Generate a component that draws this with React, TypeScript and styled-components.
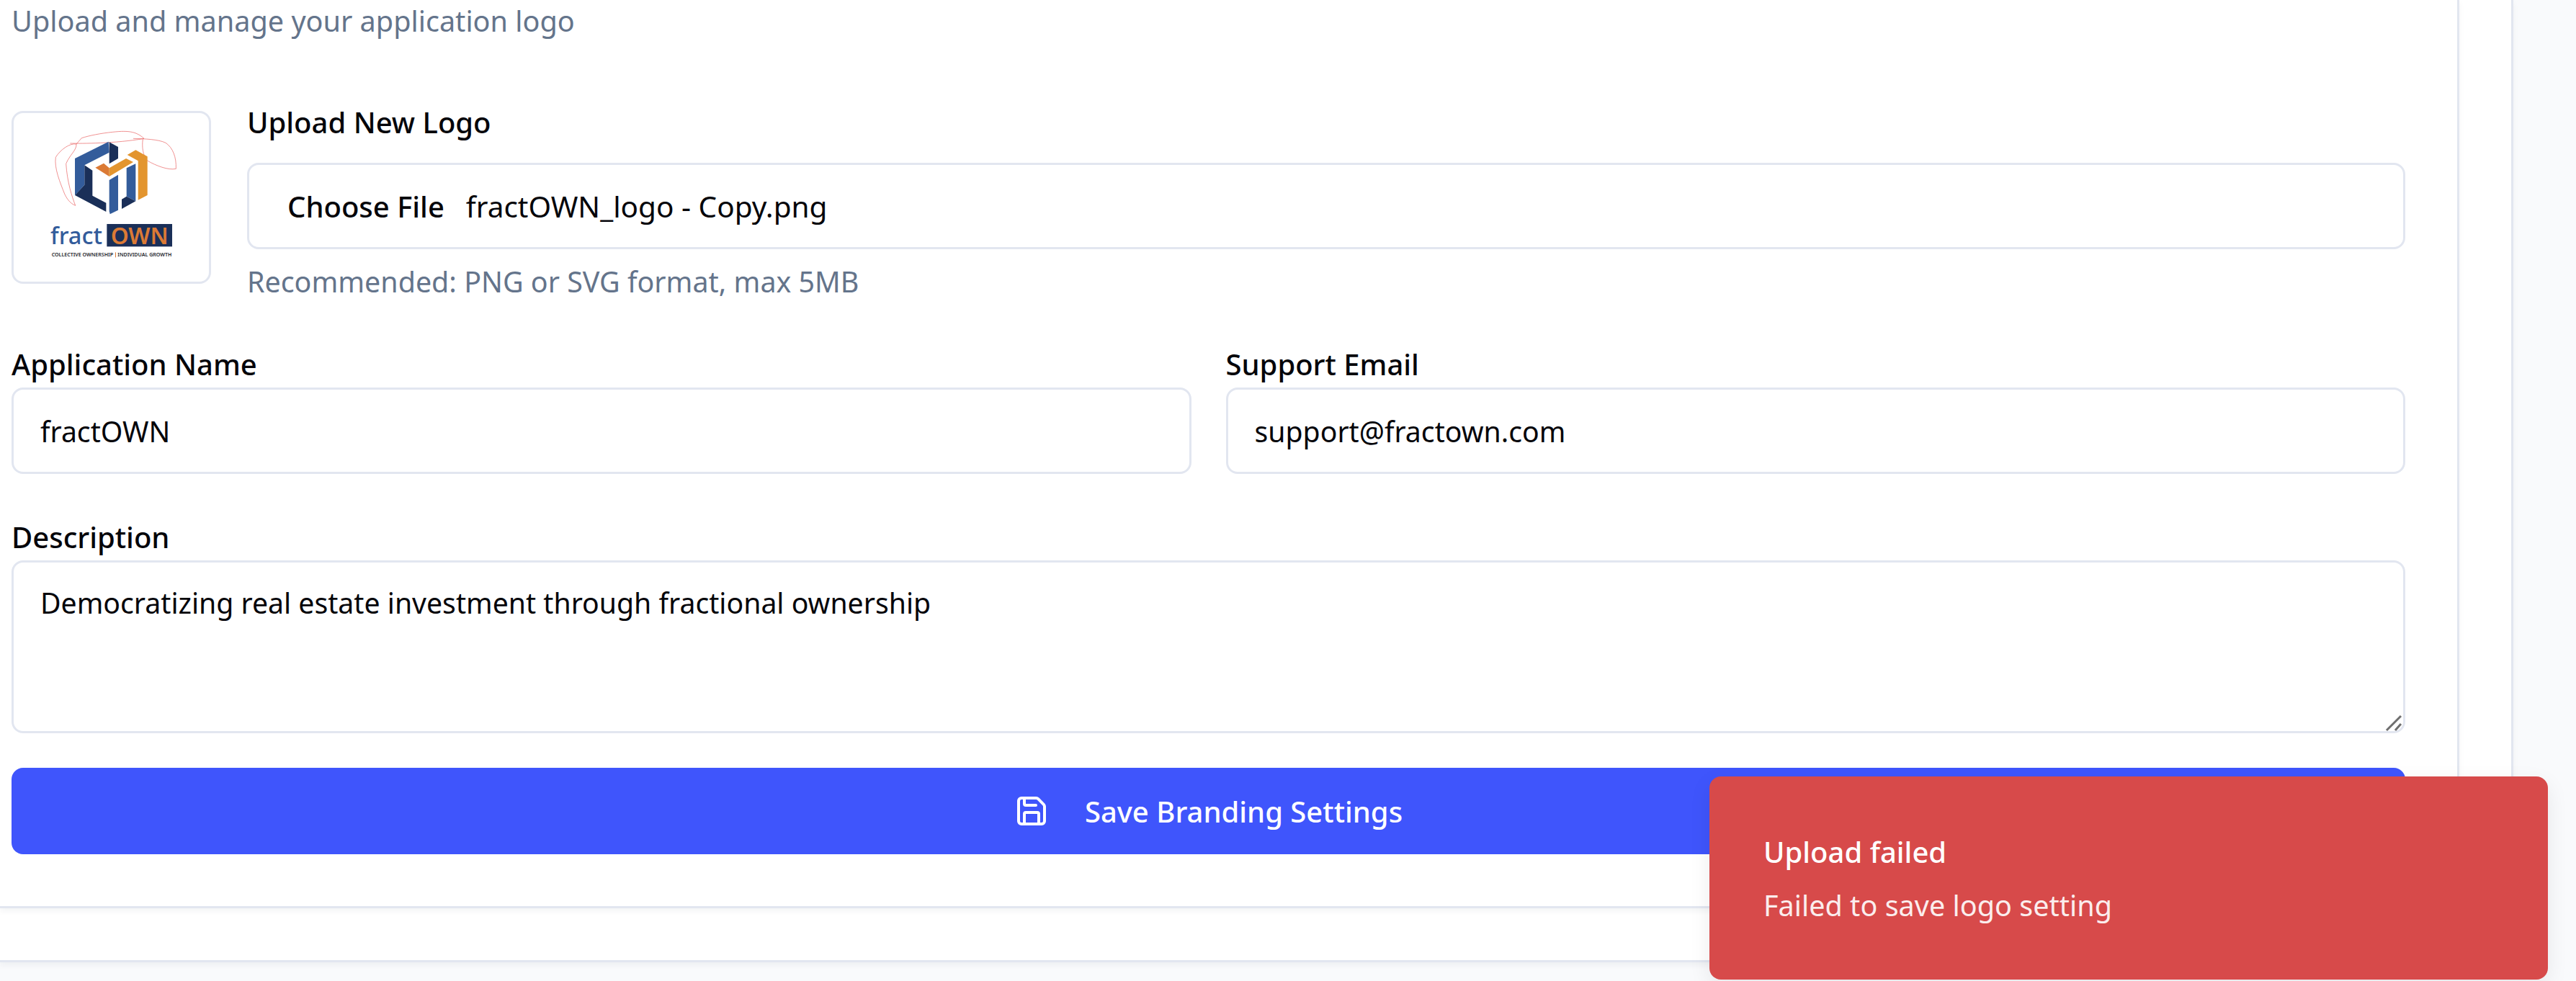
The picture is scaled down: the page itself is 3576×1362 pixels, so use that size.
import React from 'react';
import styled, { createGlobalStyle } from 'styled-components';
import { Save } from 'lucide-react';

const GlobalStyle = createGlobalStyle`
  html, body {
    margin: 0;
    padding: 0;
    background: #f9fafc;
    overflow: hidden;
  }
  * {
    box-sizing: border-box;
  }
`;

const Page = styled.div`
  position: relative;
  width: 3576px;
  height: 1362px;
  overflow: hidden;
  font-family: 'Noto Sans', 'Open Sans', sans-serif;
  font-size: 40px;
  color: #05050a;
  background: #f9fafc;
`;

const OuterCard = styled.div`
  width: 3489px;
  height: 1336px;
  background: #fff;
  border-right: 3px solid #e2e6f0;
  border-bottom: 3px solid #e2e6f0;
  box-shadow: 0 4px 8px rgba(20, 30, 60, 0.05);
`;

const InnerCard = styled.section`
  width: 3414px;
  height: 1261px;
  padding: 0 72px 0 16px;
  background: #fff;
  border-right: 3px solid #e2e6f0;
  border-bottom: 3px solid #e2e6f0;
  box-shadow: 0 4px 8px rgba(20, 30, 60, 0.05);
`;

const Subtitle = styled.p`
  margin: 0;
  height: 154px;
  padding-top: 4px;
  font-size: 39.6px;
  line-height: 50px;
  color: #64748b;
`;

const LogoRow = styled.div`
  display: flex;
  gap: 50px;
  height: 342px;
`;

const LogoBox = styled.div`
  flex: none;
  width: 277px;
  height: 240px;
  background: #fff;
  border: 3px solid #e2e6f0;
  border-radius: 16px;
  overflow: hidden;
`;

const LogoArt = styled.svg`
  display: block;
  width: 277px;
  height: 240px;
`;

const UploadColumn = styled.div`
  flex: 1;
  min-width: 0;
`;

const Label = styled.label`
  display: block;
  height: 72px;
  line-height: 32px;
  font-weight: 500;
`;

const FileField = styled.div`
  display: flex;
  align-items: center;
  height: 120px;
  padding-left: 53px;
  border: 3px solid #e2e6f0;
  border-radius: 16px;
  background: #fff;
`;

const FileButton = styled.span`
  margin-right: 30px;
  font-weight: 500;
`;

const FileName = styled.span`
  font-size: 40.5px;
`;

const Hint = styled.p`
  margin: 20px 0 0;
  font-size: 39.4px;
  line-height: 50px;
  color: #64748b;
`;

const FieldGrid = styled.div`
  display: grid;
  grid-template-columns: 1fr 1fr;
  column-gap: 48px;
`;

const FormLabel = styled(Label)`
  height: 50px;
  line-height: 36px;
  margin-top: -8px;
`;

const TextInput = styled.input`
  display: block;
  width: 100%;
  height: 120px;
  padding: 0 37px;
  border: 3px solid #e2e6f0;
  border-radius: 16px;
  background: #fff;
  color: inherit;
  font: inherit;
  font-size: 39.2px;
  outline: none;
`;

const DescriptionBlock = styled.div`
  margin-top: 78px;
`;

const TextAreaWrap = styled.div`
  position: relative;
`;

const TextArea = styled.textarea`
  display: block;
  width: 100%;
  height: 240px;
  padding: 31px 37px 0;
  border: 3px solid #e2e6f0;
  border-radius: 16px;
  background: #fff;
  color: inherit;
  font: inherit;
  font-size: 39.2px;
  line-height: 50px;
  outline: none;
  resize: none;
`;

const ResizeGrip = styled.svg`
  position: absolute;
  right: 4px;
  bottom: 2px;
  width: 24px;
  height: 24px;
`;

const SaveButton = styled.button`
  display: flex;
  align-items: center;
  justify-content: center;
  gap: 50px;
  width: 100%;
  height: 120px;
  margin-top: 48px;
  border: 0;
  border-radius: 16px;
  background: #3f55fc;
  color: #fff;
  font: inherit;
  font-weight: 500;
`;

const Toast = styled.div`
  position: absolute;
  left: 2373px;
  top: 1078px;
  width: 1164px;
  height: 282px;
  padding: 80px 75px;
  border-radius: 16px;
  background: #d74a4a;
  color: #fff;
  box-shadow: 0 10px 30px rgba(0, 0, 0, 0.08);
`;

const ToastTitle = styled.div`
  line-height: 50px;
  font-weight: 500;
`;

const ToastText = styled.div`
  margin-top: 24px;
  font-size: 39.6px;
  line-height: 50px;
  opacity: 0.9;
`;

function FractOwnLogo() {
  return (
    <LogoArt viewBox="57 51 831 720" aria-label="fractOWN logo">
      <path
        d="M314 436 C300 400 280 340 275 262 C290 225 320 205 318 180 C290 175 250 205 232 235 C225 280 250 340 270 390 C285 420 300 430 314 436 M292 177 C340 178 480 178 600 157 C570 130 540 122 470 130 C420 135 370 145 340 155 L318 180 M555 157 C600 158 660 160 690 175 C720 195 735 235 733 283 C700 290 650 270 615 250 C595 230 590 190 595 160"
        fill="none"
        stroke="#e85c5c"
        strokeWidth="2"
      />
      <path d="M312 240 L452 170 L455 215 L352 268 L352 350 L312 393 Z" fill="#335c9b" />
      <path d="M352 268 L385 290 L385 395 L442 425 L442 462 L312 393 L352 350 Z" fill="#1a2f58" />
      <path d="M455 172 L492 192 L492 240 L455 262 Z" fill="#1a2f58" />
      <path d="M397 278 L432 260 L455 280 L455 315 Z" fill="#db7a35" />
      <path d="M455 280 L525 240 L555 255 L455 315 Z" fill="#e3952f" />
      <path d="M530 225 L565 205 L614 232 L614 393 L575 413 L575 250 Z" fill="#e3952f" />
      <path d="M455 330 L492 308 L492 455 L458 472 L455 460 Z" fill="#335c9b" />
      <path d="M527 280 L565 262 L565 418 L527 398 Z" fill="#335c9b" />
      <path d="M507 410 L527 398 L565 418 L507 450 Z" fill="#1a2f58" />
      <text x="210" y="597" fontFamily="'Noto Sans', sans-serif" fontSize="100" fontWeight="500" fill="#335c9b" textLength="216" lengthAdjust="spacingAndGlyphs">
        fract
      </text>
      <rect x="445" y="513" width="272" height="94" fill="#1a2f58" />
      <text x="461" y="596" fontFamily="'Noto Sans', sans-serif" fontSize="98" fontWeight="600" fill="#db7a35" textLength="240" lengthAdjust="spacingAndGlyphs">
        OWN
      </text>
      <text x="215" y="648" fontFamily="'Noto Sans', sans-serif" fontSize="20" fontWeight="600" fill="#23252b" textLength="256" lengthAdjust="spacingAndGlyphs">
        COLLECTIVE OWNERSHIP
      </text>
      <rect x="480" y="631" width="3" height="21" fill="#db7a35" />
      <text x="490" y="648" fontFamily="'Noto Sans', sans-serif" fontSize="20" fontWeight="600" fill="#23252b" textLength="225" lengthAdjust="spacingAndGlyphs">
        INDIVIDUAL GROWTH
      </text>
    </LogoArt>
  );
}

function App() {
  return (
    <Page>
      <GlobalStyle />
      <OuterCard>
        <InnerCard>
          <Subtitle>Upload and manage your application logo</Subtitle>
          <LogoRow>
            <LogoBox>
              <FractOwnLogo />
            </LogoBox>
            <UploadColumn>
              <Label>Upload New Logo</Label>
              <FileField>
                <FileButton>Choose File</FileButton>
                <FileName>fractOWN_logo - Copy.png</FileName>
              </FileField>
              <Hint>Recommended: PNG or SVG format, max 5MB</Hint>
            </UploadColumn>
          </LogoRow>
          <FieldGrid>
            <div>
              <FormLabel>Application Name</FormLabel>
              <TextInput defaultValue="fractOWN" />
            </div>
            <div>
              <FormLabel>Support Email</FormLabel>
              <TextInput defaultValue="support@fractown.com" />
            </div>
          </FieldGrid>
          <DescriptionBlock>
            <FormLabel>Description</FormLabel>
            <TextAreaWrap>
              <TextArea defaultValue="Democratizing real estate investment through fractional ownership" />
              <ResizeGrip viewBox="0 0 24 24">
                <path d="M2 22 L22 2 M14 22 L22 13" stroke="#6e6e6e" strokeWidth="3" fill="none" />
              </ResizeGrip>
            </TextAreaWrap>
          </DescriptionBlock>
          <SaveButton>
            <Save size={48} strokeWidth={2} />
            Save Branding Settings
          </SaveButton>
        </InnerCard>
      </OuterCard>
      <Toast>
        <ToastTitle>Upload failed</ToastTitle>
        <ToastText>Failed to save logo setting</ToastText>
      </Toast>
    </Page>
  );
}

export default App;
